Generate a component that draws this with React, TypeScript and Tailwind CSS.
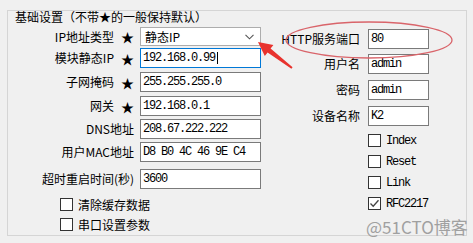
import React from "react";

const cjk = "font-['Noto_Sans_CJK_SC',sans-serif]";
const mono = "font-['Liberation_Mono','Noto_Sans_CJK_SC',monospace]";

function Field({ value, focused, cursor, h = "h-[20px]" }: { value: string; focused?: boolean; cursor?: boolean; h?: string }) {
  return (
    <div
      className={`${h} w-full bg-white border flex items-center pl-[2px] text-[12px] tracking-[-1.2px] text-black ${mono} ${
        focused ? "border-[#0078d7]" : "border-[#7a7a7a]"
      }`}
    >
      <span className="whitespace-pre">{value}</span>
      {cursor && <span className="ml-[2px] w-px h-[12px] bg-black" />}
    </div>
  );
}

function Row({ label, star, children, className = "" }: { label: string; star?: boolean; children: React.ReactNode; className?: string }) {
  return (
    <div className={`flex items-center ${className}`}>
      <div className={`w-[126px] shrink-0 flex justify-end items-center text-[12px] leading-none text-black ${cjk}`}>
        <span className="whitespace-nowrap">{label}</span>
        {star && <span className="ml-[7px] text-[13px]">★</span>}
      </div>
      <div className="ml-[6px] w-[121px]">{children}</div>
    </div>
  );
}

function RightRow({ label, value, className = "" }: { label: string; value: string; className?: string }) {
  return (
    <div className={`flex items-center ${className}`}>
      <div className={`w-[99px] shrink-0 text-right text-[12px] leading-none text-black whitespace-nowrap ${cjk}`}>{label}</div>
      <div className="ml-[8px] w-[61px]">
        <Field value={value} />
      </div>
    </div>
  );
}

function Check({ label, checked, className = "", textClass = "" }: { label: string; checked?: boolean; className?: string; textClass?: string }) {
  return (
    <div className={`flex items-center ${className}`}>
      <div className="w-[13px] h-[13px] bg-white border border-[#333] flex items-center justify-center">
        {checked && (
          <svg width="11" height="11" viewBox="0 0 11 11">
            <path d="M1.5 5.5 L4.2 8.3 L9.5 2.2" fill="none" stroke="#444" strokeWidth="1.3" />
          </svg>
        )}
      </div>
      <span className={`ml-[5px] text-black leading-none ${textClass}`}>{label}</span>
    </div>
  );
}

export default function App() {
  const boxText = `text-[12px] tracking-[-1.2px] ${mono}`;
  return (
    <div className="relative w-[473px] h-[243px] overflow-hidden bg-[#f0f0f0] pt-[10px] pl-[7px]">
      <div className="w-[460px] h-[226px] border border-[#d5d5d5]">
        <div className={`pl-[7px] h-[12px] text-[12px] leading-[12px] text-black whitespace-nowrap ${cjk}`}>
          基础设置（不带★的一般保持默认）
        </div>
        <div className="flex">
          <div className="flex flex-col">
            <Row label="IP地址类型" star className="mt-[4px]">
              <div className={`h-[19px] w-full bg-white border border-[#adadad] flex items-center justify-between pl-[4px] pr-[6px] text-[12px] text-black ${cjk}`}>
                <span>静态IP</span>
                <svg width="9" height="6" viewBox="0 0 9 6">
                  <path d="M0.5 0.8 L4.5 4.8 L8.5 0.8" fill="none" stroke="#555" strokeWidth="1.1" />
                </svg>
              </div>
            </Row>
            <Row label="模块静态IP" star className="mt-[2px]">
              <Field value="192.168.0.99" focused cursor />
            </Row>
            <Row label="子网掩码" star className="mt-[4px]">
              <Field value="255.255.255.0" />
            </Row>
            <Row label="网关" star className="mt-[4px]">
              <Field value="192.168.0.1" />
            </Row>
            <Row label="DNS地址" className="mt-[3px]">
              <Field value="208.67.222.222" />
            </Row>
            <Row label="用户MAC地址" className="mt-[3px]">
              <Field value="D8 B0 4C 46 9E C4" />
            </Row>
            <Row label="超时重启时间(秒)" className="mt-[7px]">
              <Field value="3600" />
            </Row>
            <Check label="清除缓存数据" className="ml-[52px] mt-[9px]" textClass={`text-[12px] ${cjk}`} />
            <Check label="串口设置参数" className="ml-[52px] mt-[7px]" textClass={`text-[12px] ${cjk}`} />
          </div>
          <div className="flex flex-col">
            <RightRow label="HTTP服务端口" value="80" className="mt-[6px]" />
            <RightRow label="用户名" value="admin" className="mt-[5px]" />
            <RightRow label="密码" value="admin" className="mt-[6px]" />
            <RightRow label="设备名称" value="K2" className="mt-[6px]" />
            <div className="ml-[107px] flex flex-col">
              <Check label="Index" className="mt-[8px]" textClass={boxText} />
              <Check label="Reset" className="mt-[8px]" textClass={boxText} />
              <Check label="Link" className="mt-[8px]" textClass={boxText} />
              <Check label="RFC2217" checked className="mt-[8px]" textClass={boxText} />
            </div>
          </div>
        </div>
      </div>

      {/* annotations over the screenshot */}
      <svg className="absolute left-0 top-0 pointer-events-none" width="473" height="243" viewBox="0 0 473 243">
        <ellipse cx="369" cy="40" rx="83" ry="18" fill="none" stroke="#d9646a" strokeWidth="1.3" />
        <polygon
          points="258,42 273.4,45 270.6,48.5 292.6,67.2 291.4,68.8 267.6,52.5 264.8,56"
          fill="#e8332e"
        />
      </svg>
      <div className={`absolute left-[366px] top-[218px] text-[17px] leading-none text-[#a0a0a0] whitespace-nowrap ${cjk}`}>
        @51CTO博客
      </div>
    </div>
  );
}
